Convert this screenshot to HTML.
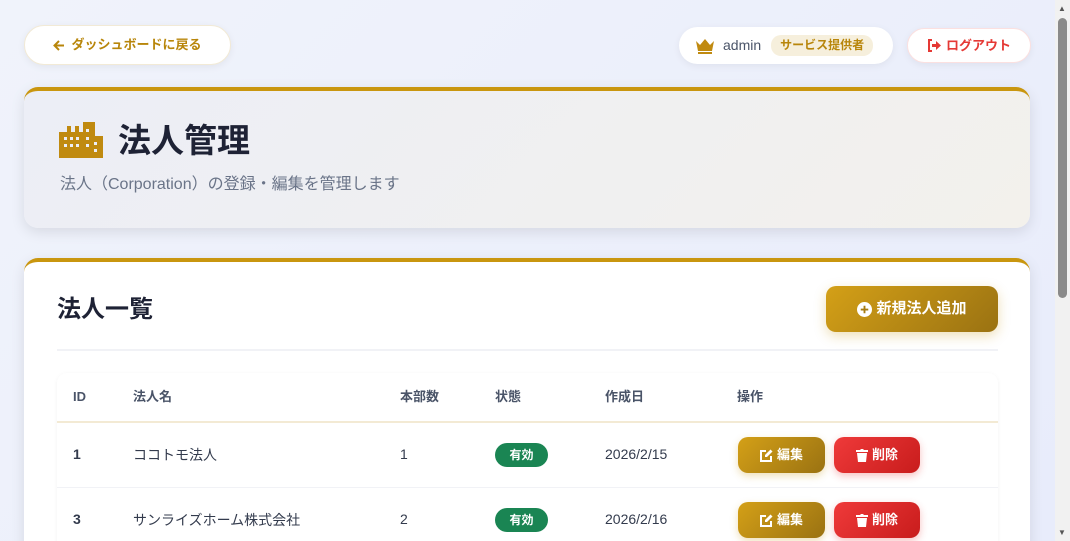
<!DOCTYPE html>
<html><head><meta charset="utf-8"><style>
*{box-sizing:border-box;margin:0;padding:0;line-height:1.2}
html,body{width:1070px;height:541px;overflow:hidden}
body{font-family:"Liberation Sans","Noto Sans CJK JP",sans-serif;background:linear-gradient(135deg,#f0f3fb,#e8ecfb);position:relative;color:#1e2235}
.abs{position:absolute}
.pill{position:absolute;background:#fff;border-radius:22px;box-shadow:0 2px 8px rgba(0,0,0,.06);display:flex;align-items:center;font-weight:700;font-size:13px}
.card{position:absolute;left:24px;width:1006px;border-radius:14px;border-top:4px solid #c9960f;box-shadow:0 4px 14px rgba(0,0,0,.1);overflow:hidden}
.th{position:absolute;font-size:13px;font-weight:700;color:#4a5468;top:389px}
.td{position:absolute;font-size:14px;color:#333b4d}
.badge{position:absolute;background:#1a8553;color:#fff;font-size:12px;font-weight:700;border-radius:12px;width:53px;height:24px;display:flex;align-items:center;justify-content:center}
.btn{position:absolute;height:36px;border-radius:10px;color:#fff;font-size:13px;font-weight:700;display:flex;align-items:center;justify-content:center;gap:4px}
.edit{background:linear-gradient(135deg,#d4a017,#9a7212);width:87px;left:738px;box-shadow:0 3px 8px rgba(200,150,20,.3)}
.del{background:linear-gradient(135deg,#ef3a3a,#c81c1c);width:86px;left:834px;box-shadow:0 3px 8px rgba(230,50,50,.3)}
</style></head><body>
<div class="pill" style="left:24px;top:25px;width:207px;height:40px;justify-content:center;color:#b8860b;border:1px solid #f2ead6">
<svg width="12" height="11" viewBox="0 0 12 11" style="margin-right:6px"><path d="M11 5.5H2M6 1L1.5 5.5 6 10" stroke="#b8860b" stroke-width="2" fill="none"/></svg>ダッシュボードに戻る</div>
<div class="pill" style="left:679px;top:27px;width:214px;height:37px;padding-left:16px;font-weight:400;color:#4a5468;font-size:14px">
<svg width="20" height="16" viewBox="0 0 20 16"><path d="M1 3l4 4 5-6 5 6 4-4-2 10H3z" fill="#c08a10"/><rect x="3" y="14" width="14" height="2" fill="#c08a10"/></svg>
<span style="margin-left:8px">admin</span>
<span style="margin-left:10px;background:#f6efdc;color:#b8860b;font-weight:700;font-size:12px;border-radius:10px;padding:3px 9px">サービス提供者</span></div>
<div class="pill" style="left:907px;top:28px;width:124px;height:35px;justify-content:center;color:#e53935;border:1px solid #fbe0e0">
<svg width="14" height="13" viewBox="0 0 14 13" style="margin-right:5px"><path d="M5 1H2v11h3" stroke="#e53935" stroke-width="2" fill="none"/><path d="M5 5h4V2l5 4.5L9 11V8H5z" fill="#e53935"/></svg>ログアウト</div>

<div class="card" style="top:87px;height:141px;background:linear-gradient(135deg,#eceef6,#f3f1ec)">
<svg class="abs" style="left:35px;top:31px" width="44" height="36" viewBox="0 0 44 36"><path d="M0 10h8V4h4v6h4V4h4v6h4V0h12v14h8v22H0z" fill="#c08a10"/>
<g fill="#eceef6"><rect x="5" y="15" width="3" height="3"/><rect x="11" y="15" width="3" height="3"/><rect x="17" y="15" width="3" height="3"/><rect x="27" y="7" width="3" height="3"/><rect x="27" y="15" width="3" height="3"/><rect x="35" y="20" width="3" height="3"/><rect x="5" y="22" width="3" height="3"/><rect x="11" y="22" width="3" height="3"/><rect x="17" y="22" width="3" height="3"/><rect x="27" y="22" width="3" height="3"/><rect x="35" y="27" width="3" height="3"/></g></svg>
<div class="abs" style="left:94px;top:30px;font-size:33px;font-weight:700">法人管理</div>
<div class="abs" style="left:36px;top:84px;font-size:16px;color:#6a7488">法人（Corporation）の登録・編集を管理します</div>
</div>

<div class="card" style="top:258px;height:300px;background:#fff">
<div class="abs" style="left:33px;top:34px;font-size:24px;font-weight:700">法人一覧</div>
<div class="abs" style="left:33px;top:87px;width:941px;height:2px;background:#f1f2f6"></div>
</div>
<div class="btn" style="left:826px;top:286px;width:172px;height:46px;background:linear-gradient(135deg,#d4a017,#9a7212);font-size:15px;box-shadow:0 4px 12px rgba(200,150,20,.3)"><svg width="15" height="15" viewBox="0 0 16 16"><circle cx="8" cy="8" r="8" fill="#fff"/><path d="M8 4v8M4 8h8" stroke="#a67c12" stroke-width="2"/></svg>新規法人追加</div>
<div class="abs" style="left:57px;top:373px;width:941px;height:180px;border-radius:10px;box-shadow:0 1px 4px rgba(0,0,0,.05);background:#fff"></div>
<div class="abs" style="left:57px;top:421px;width:941px;height:2px;background:#f3ead4"></div>
<div class="abs" style="left:57px;top:487px;width:941px;height:1px;background:#f1f2f6"></div>
<div class="th" style="left:73px">ID</div><div class="th" style="left:133px">法人名</div><div class="th" style="left:400px">本部数</div><div class="th" style="left:495px">状態</div><div class="th" style="left:605px">作成日</div><div class="th" style="left:737px">操作</div>
<div class="td" style="left:73px;top:446px;font-weight:700">1</div><div class="td" style="left:133px;top:447px">ココトモ法人</div><div class="td" style="left:400px;top:446px">1</div><div class="badge" style="left:495px;top:443px">有効</div><div class="td" style="left:605px;top:446px">2026/2/15</div>
<div class="btn edit" style="top:437px"><svg width="13" height="13" viewBox="0 0 13 13"><path d="M6 2H1v10h10V7" stroke="#fff" stroke-width="2" fill="none"/><path d="M10.5 0.5l2 2L7 8H5V6z" fill="#fff"/></svg>編集</div><div class="btn del" style="top:437px"><svg width="12" height="13" viewBox="0 0 12 13"><path d="M0 1h4l1-1h2l1 1h4v2H0zM1 4h10l-1 9H2z" fill="#fff"/></svg>削除</div>
<div class="td" style="left:73px;top:511px;font-weight:700">3</div><div class="td" style="left:133px;top:512px">サンライズホーム株式会社</div><div class="td" style="left:400px;top:511px">2</div><div class="badge" style="left:495px;top:508px">有効</div><div class="td" style="left:605px;top:511px">2026/2/16</div>
<div class="btn edit" style="top:502px"><svg width="13" height="13" viewBox="0 0 13 13"><path d="M6 2H1v10h10V7" stroke="#fff" stroke-width="2" fill="none"/><path d="M10.5 0.5l2 2L7 8H5V6z" fill="#fff"/></svg>編集</div><div class="btn del" style="top:502px"><svg width="12" height="13" viewBox="0 0 12 13"><path d="M0 1h4l1-1h2l1 1h4v2H0zM1 4h10l-1 9H2z" fill="#fff"/></svg>削除</div>

<div class="abs" style="left:1055px;top:0;width:15px;height:541px;background:#f1f1f1"></div>
<div class="abs" style="left:1058px;top:18px;width:9px;height:280px;background:#8a8a8a;border-radius:5px"></div>
<div class="abs" style="left:1058px;top:4px;font-size:8px;color:#555">▲</div>
<div class="abs" style="left:1058px;top:528px;font-size:8px;color:#555">▼</div>
</body></html>
